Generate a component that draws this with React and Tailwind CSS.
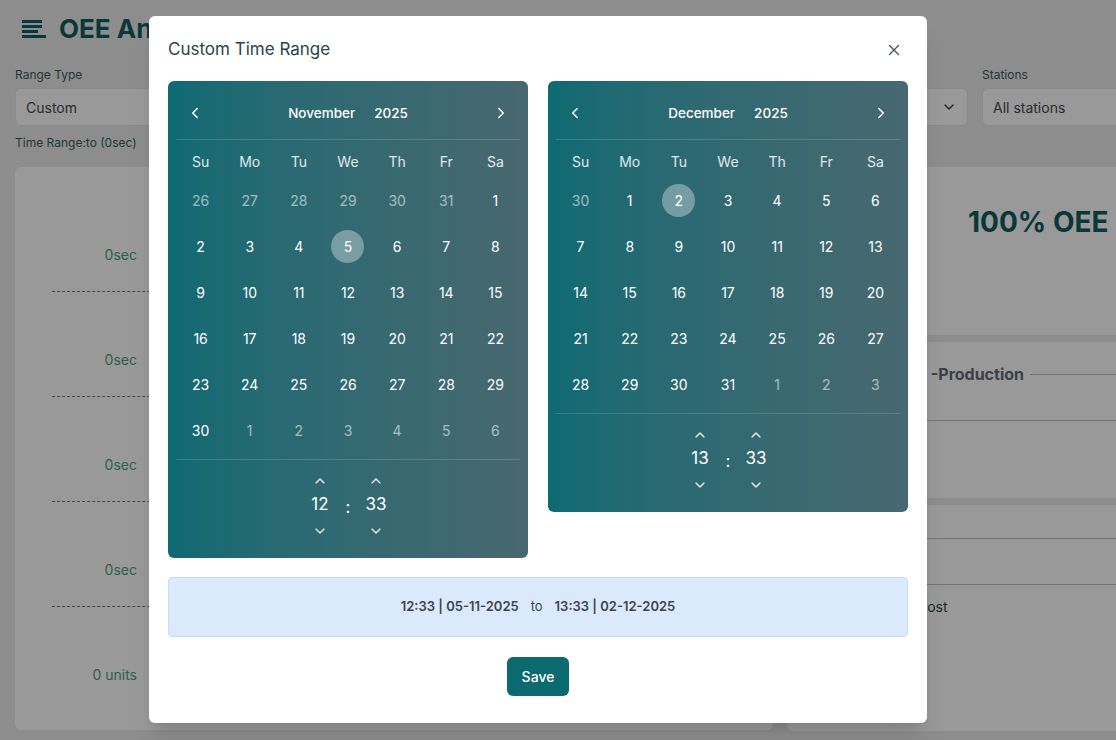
import { ChevronDown, ChevronLeft, ChevronRight, ChevronUp, X } from 'lucide-react';

const WEEKDAYS = ['Su', 'Mo', 'Tu', 'We', 'Th', 'Fr', 'Sa'];

// [day, outsideMonth]
const NOVEMBER = [
    [[26, 1], [27, 1], [28, 1], [29, 1], [30, 1], [31, 1], [1, 0]],
    [[2, 0], [3, 0], [4, 0], [5, 0], [6, 0], [7, 0], [8, 0]],
    [[9, 0], [10, 0], [11, 0], [12, 0], [13, 0], [14, 0], [15, 0]],
    [[16, 0], [17, 0], [18, 0], [19, 0], [20, 0], [21, 0], [22, 0]],
    [[23, 0], [24, 0], [25, 0], [26, 0], [27, 0], [28, 0], [29, 0]],
    [[30, 0], [1, 1], [2, 1], [3, 1], [4, 1], [5, 1], [6, 1]],
];

const DECEMBER = [
    [[30, 1], [1, 0], [2, 0], [3, 0], [4, 0], [5, 0], [6, 0]],
    [[7, 0], [8, 0], [9, 0], [10, 0], [11, 0], [12, 0], [13, 0]],
    [[14, 0], [15, 0], [16, 0], [17, 0], [18, 0], [19, 0], [20, 0]],
    [[21, 0], [22, 0], [23, 0], [24, 0], [25, 0], [26, 0], [27, 0]],
    [[28, 0], [29, 0], [30, 0], [31, 0], [1, 1], [2, 1], [3, 1]],
];

function TimeUnit({ value }) {
    return (
        <div className="flex w-[28px] flex-col items-center">
            <button className="flex h-[18px] items-center justify-center">
                <ChevronUp size={16} strokeWidth={1.75} />
            </button>
            <div className="h-[28px] text-[17px] leading-[28px]">{value}</div>
            <button className="mt-[4px] flex h-[18px] items-center justify-center">
                <ChevronDown size={16} strokeWidth={1.75} />
            </button>
        </div>
    );
}

function Calendar({ month, year, weeks, selected, hour, minute }) {
    return (
        <div className="w-[360px] rounded-[6px] bg-linear-to-r from-[#0d6a73] to-[#476870] px-2 text-white">
            <div className="flex h-[59px] items-center justify-between border-b border-white/15 px-[10px] pt-[6px]">
                <ChevronLeft size={18} strokeWidth={2} />
                <div className="flex gap-[19px] text-[13.5px] font-medium">
                    <span>{month}</span>
                    <span>{year}</span>
                </div>
                <ChevronRight size={18} strokeWidth={2} />
            </div>
            <div className="grid grid-cols-7 pt-[12px] pb-[5px] text-center text-[14px] leading-5 text-white/85">
                {WEEKDAYS.map(w => <div key={w}>{w}</div>)}
            </div>
            <div className="grid grid-cols-7 border-b border-white/15 pb-[6px] text-[14px]">
                {weeks.flat().map(([d, out], i) => (
                    <div key={i} className="flex h-[46px] items-center justify-center">
                        {!out && d === selected ? (
                            <span className="flex h-[33px] w-[33px] items-center justify-center rounded-full bg-white/35">{d}</span>
                        ) : (
                            <span className={out ? 'text-white/55' : ''}>{d}</span>
                        )}
                    </div>
                ))}
            </div>
            <div className="flex items-start justify-center gap-[10px] pt-[12px] pb-[18px]">
                <TimeUnit value={hour} />
                <div className="mt-[18px] w-[8px] text-center text-[17px] leading-[34px]">:</div>
                <TimeUnit value={minute} />
            </div>
        </div>
    );
}

function FilterBox({ label, value, width, chevron }) {
    return (
        <div className={`flex shrink-0 flex-col ${width}`}>
            <div className="mb-[5px] text-[12px] leading-4 text-[#3d5c5c]">{label}</div>
            <div className="flex h-[38px] items-center justify-between rounded-[6px] border border-[#e3e6e6] bg-white px-[10px] text-[14px] text-[#444b52]">
                <span>{value}</span>
                {chevron && <ChevronDown size={16} className="text-[#333]" />}
            </div>
        </div>
    );
}

export default function App() {
    return (
        <div className="relative h-[740px] w-[1116px] overflow-hidden bg-[#ebebeb] font-['Inter',sans-serif]">
            {/* page under the dialog */}
            <div className="flex items-center gap-[13px] px-[22px] pt-[13px]">
                <svg width="24" height="18" viewBox="0 0 24 18" className="text-[#115e5e]">
                    <rect x="0" y="0" width="20" height="3" fill="currentColor" />
                    <rect x="0" y="5" width="20" height="3" fill="currentColor" />
                    <rect x="0" y="10" width="16" height="3" fill="currentColor" />
                    <rect x="0" y="15" width="24" height="3" fill="currentColor" />
                </svg>
                <h1 className="text-[26px] leading-8 font-bold text-[#115e5e]">OEE Analytics</h1>
            </div>

            <div className="mt-[22px] flex gap-[14px] px-[15px]">
                <FilterBox label="Range Type" value="Custom" width="w-[300px]" chevron />
                <FilterBox label="Shift" value="All shifts" width="w-[310px]" chevron />
                <FilterBox label="Line" value="All lines" width="w-[315px]" chevron />
                <FilterBox label="Stations" value="All stations" width="w-[300px]" />
            </div>
            <div className="mt-[9px] px-[15px] text-[12px] leading-4 text-[#3d5c5c]">Time Range:to (0sec)</div>

            <div className="mt-[16px] flex gap-[14px] px-[15px]">
                <div className="h-[563px] w-[758px] shrink-0 rounded-[6px] bg-white pt-[78px]">
                    {['0sec', '0sec', '0sec', '0sec'].map((t, i) => (
                        <div key={i} className="h-[105px]">
                            <div className="w-[122px] text-right text-[14px] leading-5 text-[#4aa37e]">{t}</div>
                            <div className="mt-[26px] ml-[37px] w-[640px] border-t border-dashed border-[#777]" />
                        </div>
                    ))}
                    <div className="w-[122px] text-right text-[14px] leading-5 text-[#4aa37e]">0 units</div>
                </div>

                <div className="flex w-[504px] shrink-0 flex-col gap-[7px]">
                    <div className="h-[168px] rounded-[6px] bg-white pt-[37px] pl-[181px] text-[28px] leading-9 font-bold text-[#115e5e]">
                        100% OEE
                    </div>
                    <div className="h-[156px] rounded-[6px] bg-white">
                        <div className="h-[79px] border-b border-[#bcc1c1]">
                            <div className="flex h-[64px] items-center justify-end gap-[6px] pr-4">
                                <span className="text-[16px] font-bold text-[#5f6b78]">Loss -Production</span>
                                <div className="w-[245px] border-t border-[#bcc1c1]" />
                            </div>
                        </div>
                    </div>
                    <div className="h-[226px] rounded-[6px] bg-white">
                        <div className="h-[34px] border-b border-[#bcc1c1]" />
                        <div className="h-[46px] border-b border-[#bcc1c1]" />
                        <div className="pt-[12px] pl-[130px] text-[14px] leading-5 text-[#2e4a4a]">Cost</div>
                    </div>
                </div>
            </div>

            {/* overlay */}
            <div className="absolute inset-0 bg-black/40" />

            {/* dialog */}
            <div className="absolute top-[16px] left-[149px] w-[778px] rounded-[6px] bg-white px-[19px] pt-[22px] pb-[27px] shadow-xl">
                <div className="mb-[19px] flex h-6 items-center justify-between">
                    <h2 className="text-[17px] text-[#2d4448]">Custom Time Range</h2>
                    <button className="mr-[5px] text-[#3d5558]">
                        <X size={18} strokeWidth={1.75} />
                    </button>
                </div>

                <div className="flex items-start gap-5">
                    <Calendar month="November" year="2025" weeks={NOVEMBER} selected={5} hour="12" minute="33" />
                    <Calendar month="December" year="2025" weeks={DECEMBER} selected={2} hour="13" minute="33" />
                </div>

                <div className="mt-[19px] flex h-[60px] items-center justify-center gap-3 rounded-[4px] border border-[#c9dbf2] bg-[#dbe9fc] text-[13px] text-[#3b4450]">
                    <span className="font-semibold">12:33 | 05-11-2025</span>
                    <span>to</span>
                    <span className="font-semibold">13:33 | 02-12-2025</span>
                </div>

                <div className="mt-5 flex justify-center">
                    <button className="h-[39px] w-[62px] rounded-[6px] bg-[#0b6a70] text-[14px] font-medium text-white">Save</button>
                </div>
            </div>
        </div>
    );
}
